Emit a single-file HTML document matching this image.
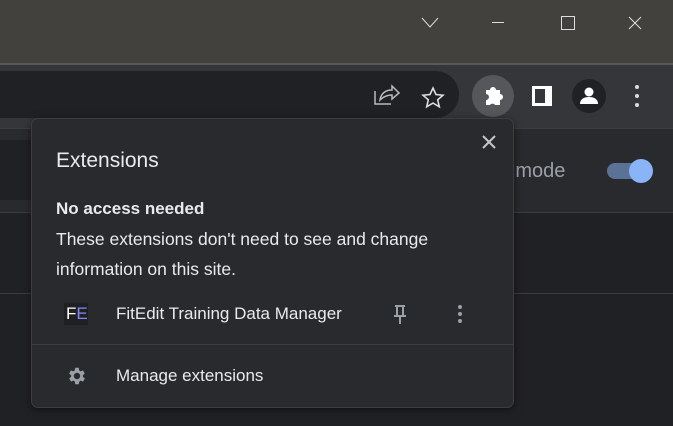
<!DOCTYPE html>
<html><head><style>
*{margin:0;padding:0;box-sizing:border-box}
body{width:673px;height:426px;overflow:hidden;background:#202124;font-family:"Liberation Sans",sans-serif;position:relative}
.a{position:absolute;white-space:nowrap}
</style></head><body>
<div class="a" style="left:0;top:0;width:673px;height:63px;background:#43413e"></div>
<div class="a" style="left:0;top:63px;width:673px;height:2px;background:#5a5855"></div>
<div class="a" style="left:0;top:65px;width:673px;height:65px;background:#35363a"></div>
<div class="a" style="left:-30px;top:71px;width:489px;height:47px;border-radius:24px;background:#202124"></div>
<svg class="a" style="left:0;top:0" width="673" height="63">
<path d="M422 18l8 9 8-9" stroke="#ddd" fill="none" stroke-width="1"/>
<line x1="492" y1="22.5" x2="504" y2="22.5" stroke="#ddd"/>
<rect x="561.5" y="16.5" width="13" height="13" stroke="#ddd" fill="none"/>
<path d="M629 17l12 12M641 17l-12 12" stroke="#ddd"/>
</svg>
<svg class="a" style="left:0;top:65px" width="673" height="65">
<path d="M375 26v13h16" stroke="#bbb" fill="none" stroke-width="1.5"/>
<path d="M380 35c1-7 6-10 12-10v-4l7 7-7 6v-4c-5 0-9 2-12 5z" stroke="#bbb" fill="none" stroke-width="1.5"/>
<path d="M433 23l3 6.5 7 .7-5.3 4.6 1.6 7-6.3-3.7-6.3 3.7 1.6-7-5.3-4.6 7-.7z" stroke="#ddd" fill="none" stroke-width="1.6"/>
<circle cx="493" cy="31" r="21" fill="#56575b"/>
<path d="M486 25h4a3 3 0 016 0h4v4a3 3 0 010 6v5h-5a3 3 0 00-5 0h-4v-5a3 3 0 000-6z" fill="#fff"/>
<rect x="532" y="21" width="20" height="20" fill="#fff"/><rect x="535" y="24" width="10" height="14" fill="#35363a"/>
<circle cx="589" cy="31" r="17" fill="#202124"/>
<circle cx="589" cy="27" r="4.5" fill="#fff"/><path d="M580 39c0-5 4-7 9-7s9 2 9 7z" fill="#fff"/>
<circle cx="637" cy="22" r="2" fill="#ddd"/><circle cx="637" cy="31" r="2" fill="#ddd"/><circle cx="637" cy="40" r="2" fill="#ddd"/>
</svg>
<div class="a" style="left:0;top:128px;width:673px;height:84px;background:#292a2d;border-top:1px solid #3c3d40"></div>
<div class="a" style="left:0;top:140px;width:60px;height:60px;background:#202124"></div>
<div class="a" style="left:0;top:212px;width:673px;height:1px;background:#3c3d40"></div>
<div class="a" style="left:0;top:293px;width:673px;height:1px;background:#3c3d40"></div>
<div class="a" style="left:492px;top:160px;font-size:20px;color:#9aa0a6">er mode</div>
<div class="a" style="left:607px;top:163px;width:40px;height:16px;border-radius:8px;background:#5b7196"></div>
<div class="a" style="left:629px;top:159px;width:24px;height:24px;border-radius:50%;background:#8ab4f8"></div>
<div class="a" style="left:31px;top:118px;width:483px;height:290px;background:#292a2d;border:1px solid #3c3d40;border-radius:7px;box-shadow:0 2px 8px rgba(0,0,0,.5)"></div>
<svg class="a" style="left:481px;top:134px" width="16" height="16"><path d="M2 2l12 12M14 2L2 14" stroke="#c4c7c5" stroke-width="2"/></svg>
<div class="a" style="left:56px;top:149px;font-size:21px;color:#e8eaed">Extensions</div>
<div class="a" style="left:56px;top:199px;font-size:17px;font-weight:bold;color:#e8eaed">No access needed</div>
<div class="a" style="left:56px;top:224px;font-size:17.5px;color:#e8eaed;line-height:30px">These extensions don't need to see and change<br>information on this site.</div>
<div class="a" style="left:64px;top:303px;width:24px;height:22px;background:#202022;font-size:17px;line-height:22px;padding-left:2px;color:#fff">F<span style="color:#8487f5">E</span></div>
<div class="a" style="left:116px;top:304px;font-size:17px;color:#e8eaed">FitEdit Training Data Manager</div>
<svg class="a" style="left:390px;top:304px" width="20" height="22"><path d="M5 2h10M7 2v9M13 2v9M4 12h12M10 12v8" stroke="#9aa0a6" stroke-width="2" fill="none"/></svg>
<svg class="a" style="left:454px;top:303px" width="12" height="22"><circle cx="6" cy="4" r="2" fill="#9aa0a6"/><circle cx="6" cy="11" r="2" fill="#9aa0a6"/><circle cx="6" cy="18" r="2" fill="#9aa0a6"/></svg>
<div class="a" style="left:32px;top:344px;width:481px;height:1px;background:#3c3d40"></div>
<svg class="a" style="left:66px;top:365px" width="22" height="22" viewBox="0 0 24 24"><path fill="#9aa0a6" d="M19.4 13a7.5 7.5 0 000-2l2.1-1.6-2-3.5-2.5 1a7 7 0 00-1.7-1L15 3h-4l-.4 2.9a7 7 0 00-1.7 1l-2.5-1-2 3.5L6.6 11a7.5 7.5 0 000 2l-2.1 1.6 2 3.5 2.5-1a7 7 0 001.7 1L11 21h4l.4-2.9a7 7 0 001.7-1l2.5 1 2-3.5zM13 15.5a3.5 3.5 0 110-7 3.5 3.5 0 010 7z" transform="translate(-1 0)"/></svg>
<div class="a" style="left:116px;top:366px;font-size:17px;color:#e8eaed">Manage extensions</div>
</body></html>
